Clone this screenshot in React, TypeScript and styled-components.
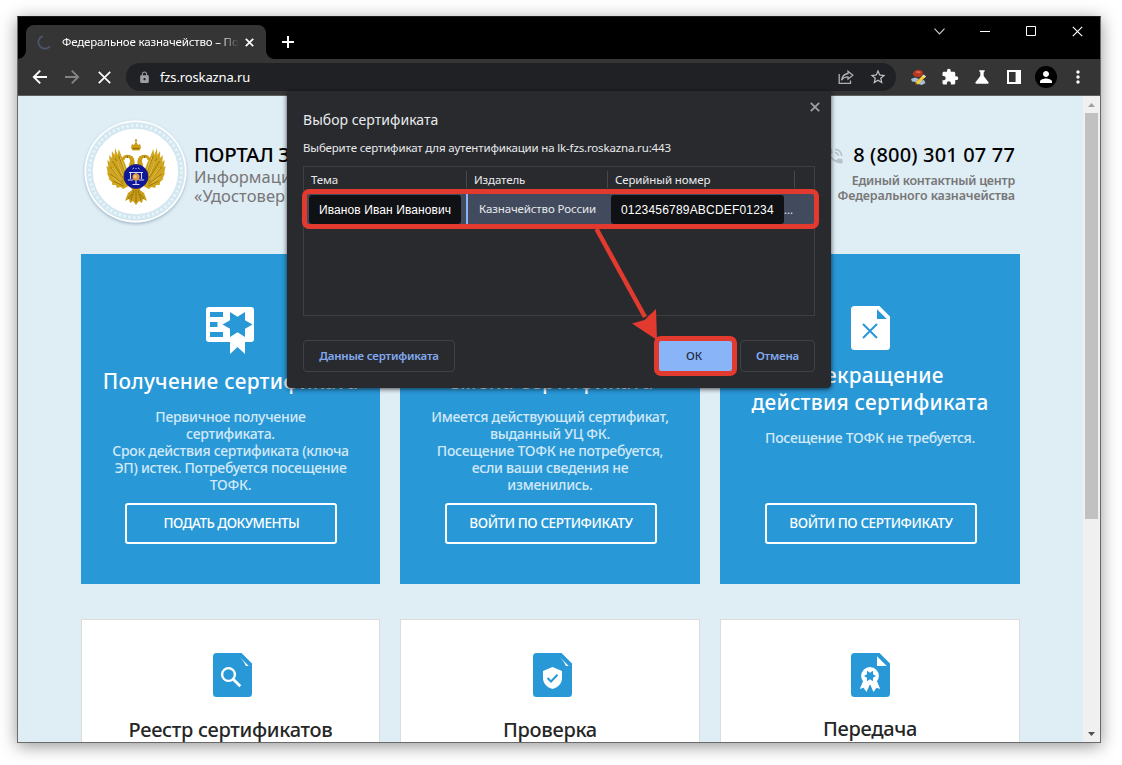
import React from 'react';
import styled, { createGlobalStyle, css } from 'styled-components';
import { MdExtension, MdScience, MdStarBorder, MdPerson, MdLock, MdMoreVert, MdPhoneInTalk } from 'react-icons/md';

const Global = createGlobalStyle`
  * { box-sizing: border-box; }
  body { margin: 0; background: #fff; font-family: "Noto Sans", sans-serif; overflow: hidden; }
`;

const Desktop = styled.div`
  width: 1122px;
  height: 765px;
  padding: 16px 0 0 17px;
  overflow: hidden;
`;

const BrowserWindow = styled.div`
  position: relative;
  display: flex;
  flex-direction: column;
  width: 1084px;
  height: 727px;
  border: 1px solid #6a6a6a;
  border-top-color: #1c1c1c;
  background: #000;
  box-shadow: 0 3px 16px rgba(0, 0, 0, 0.42);
`;

const TitleBar = styled.div`
  display: flex;
  flex: none;
  height: 42px;
  padding-left: 8px;
`;

const Tab = styled.div`
  position: relative;
  display: flex;
  align-items: center;
  width: 240px;
  height: 34px;
  margin-top: 8px;
  padding: 0 12px 0 11px;
  border-radius: 8px 8px 0 0;
  background: #353535;
  color: #fff;
  &::before, &::after {
    content: "";
    position: absolute;
    bottom: 0;
    width: 8px;
    height: 8px;
  }
  &::before { left: -8px; background: radial-gradient(circle at 0 0, transparent 7.5px, #353535 8px); }
  &::after { right: -8px; background: radial-gradient(circle at 100% 0, transparent 7.5px, #353535 8px); }
`;

const TabTitle = styled.span`
  flex: 1;
  margin: 0 7px 0 9px;
  overflow: hidden;
  white-space: nowrap;
  font-size: 11.5px;
  line-height: 18px;
  letter-spacing: -0.17px;
  mask-image: linear-gradient(90deg, #000 157px, transparent 177px);
`;

const NewTab = styled.div`
  display: flex;
  align-items: center;
  margin: 8px 0 0 16px;
  height: 34px;
`;

const Controls = styled.div`
  display: flex;
  margin-left: auto;
  height: 28px;
`;

const Control = styled.div`
  display: flex;
  align-items: center;
  justify-content: center;
  width: 46px;
`;

const Toolbar = styled.div`
  display: flex;
  flex: none;
  align-items: center;
  height: 37px;
  padding: 0 6px;
  border-bottom: 1px solid #5d5e60;
  background: #353535;
`;

const Slot = styled.div`
  display: flex;
  align-items: center;
  justify-content: center;
  width: 32px;
  height: 28px;
  color: #fff;
`;

const Omnibox = styled.div`
  display: flex;
  flex: 1;
  align-items: center;
  height: 28px;
  margin: 0 6px;
  padding: 0 2px 0 12px;
  border-radius: 14px;
  background: #202124;
  color: #9aa0a6;
`;

const Url = styled.span`
  flex: 1;
  margin-left: 9px;
  color: #fff;
  font-size: 13px;
  line-height: 18px;
  letter-spacing: -0.13px;
`;

const Avatar = styled.div`
  display: flex;
  align-items: center;
  justify-content: center;
  width: 22px;
  height: 22px;
  border-radius: 50%;
  background: #000;
`;

const Viewport = styled.div`
  display: flex;
  flex: 1;
  min-height: 0;
  overflow: hidden;
`;

const Page = styled.main`
  flex: 1;
  padding: 0 63px;
  background: #dfedf5;
`;

const PageHeader = styled.header`
  display: flex;
  align-items: flex-start;
  height: 158px;
  padding-top: 22px;
`;

const LogoBox = styled.div`
  width: 108px;
  height: 108px;
  margin-left: 1px;
  flex: none;
`;

const Brand = styled.div`
  margin: 24px 0 0 4px;
  white-space: nowrap;
`;

const BrandName = styled.div`
  margin-bottom: 1px;
  color: #000;
  font-size: 20.5px;
  font-weight: 500;
  line-height: 24px;
  letter-spacing: -0.35px;
`;

const BrandText = styled.div`
  color: #777;
  font-size: 16.5px;
  line-height: 19px;
  letter-spacing: 0.05px;
`;

const Contacts = styled.div`
  display: flex;
  flex-direction: column;
  margin: 22px 5px 0 auto;
  text-align: right;
`;

const Phone = styled.div`
  display: flex;
  align-items: center;
  justify-content: flex-end;
  gap: 8px;
  height: 28px;
  margin-bottom: 5px;
  color: #000;
  font-size: 20px;
  font-weight: 500;
  letter-spacing: 0.16px;
  svg { color: #b7c2c8; margin-top: 3px; }
`;

const ContactLine = styled.div<{ $ls: number }>`
  color: #777;
  font-size: 12.5px;
  font-weight: 600;
  line-height: 15px;
  letter-spacing: ${p => p.$ls}px;
`;

const Grid = styled.div`
  display: grid;
  grid-template-columns: 299px 300px 300px;
  gap: 35px 20px;
`;

const cardBase = css`
  display: flex;
  flex-direction: column;
  align-items: center;
  text-align: center;
`;

const ServiceCard = styled.section<{ $top: number }>`
  ${cardBase}
  height: 330px;
  padding: ${p => p.$top}px 0 40px;
  background: #2898d7;
  color: #fff;
`;

const ServiceTitle = styled.h2<{ $gap: number }>`
  margin: ${p => p.$gap}px 0 13px;
  font-size: 20.8px;
  font-weight: 500;
  line-height: 27px;
  letter-spacing: 0.26px;
  white-space: nowrap;
`;

const Description = styled.p`
  margin: 0;
  color: #d2e9f7;
  font-size: 14px;
  font-weight: 500;
  line-height: 17px;
  letter-spacing: -0.28px;
  white-space: nowrap;
`;

const ActionButton = styled.button<{ $ls: number }>`
  width: 212px;
  height: 41px;
  margin: auto 0 0 1.8px;
  padding: 0 0 2px;
  border: 2px solid #fff;
  border-radius: 3px;
  background: transparent;
  color: #fff;
  font: 500 13.5px/20px "Noto Sans", sans-serif;
  letter-spacing: ${p => p.$ls}px;
`;

const InfoCard = styled.section`
  ${cardBase}
  height: 330px;
  padding-top: 33px;
  border: 1px solid #dcdcdc;
  background: #fff;
`;

const IconShift = styled.div<{ $left?: number; $right?: number }>`
  display: flex;
  padding: 0 ${p => p.$right ?? 0}px 0 ${p => p.$left ?? 0}px;
`;

const InfoTitle = styled.h2<{ $top: number }>`
  margin: ${p => p.$top}px 0 0;
  color: #262626;
  font-size: 20px;
  font-weight: 500;
  line-height: 26px;
  letter-spacing: -0.3px;
`;

const ScrollBar = styled.div`
  display: flex;
  flex-direction: column;
  align-items: center;
  width: 17px;
  background: #f0f0f0;
`;

const ScrollButton = styled.div`
  display: flex;
  align-items: center;
  justify-content: center;
  width: 17px;
  height: 17px;
`;

const ScrollThumb = styled.div`
  width: 13px;
  height: 406px;
  margin-bottom: auto;
  background: #c1c1c1;
`;

const Dialog = styled.div`
  position: absolute;
  left: 269px;
  top: 74px;
  display: flex;
  flex-direction: column;
  width: 544px;
  height: 297px;
  padding: 18px 16px 16px;
  border-radius: 4px;
  background: #292a2d;
  box-shadow: 0 1px 5px rgba(0, 0, 0, 0.7);
  color: #e8eaed;
`;

const DialogClose = styled.div`
  position: absolute;
  right: 11px;
  top: 11px;
  display: flex;
`;

const DialogTitle = styled.div`
  font-size: 14px;
  line-height: 22px;
  letter-spacing: 0.04px;
  white-space: nowrap;
`;

const DialogText = styled.div`
  margin-top: 8px;
  font-size: 11.5px;
  line-height: 18px;
  letter-spacing: -0.16px;
  white-space: nowrap;
`;

const CertTable = styled.div`
  height: 150px;
  margin-top: 9px;
  border: 1px solid #3d3f43;
`;

const columns = css`
  display: grid;
  grid-template-columns: 163px 141px 187px 1fr;
  font-size: 11.5px;
  letter-spacing: -0.12px;
  white-space: nowrap;
`;

const HeadRow = styled.div`
  ${columns}
  height: 27px;
  padding-top: 4px;
`;

const HeadCell = styled.div`
  height: 17px;
  padding-left: 7px;
  border-right: 1px solid #46484c;
  line-height: 18px;
  &:last-child { border-right: 0; }
`;

const CertRow = styled.div`
  ${columns}
  position: relative;
  height: 30px;
  background: #414b5d;
  &::after {
    content: "";
    position: absolute;
    inset: -5px -5px -5px -2px;
    border: 5px solid #e33a30;
    border-radius: 7px;
  }
`;

const CertCell = styled.div<{ $marked?: boolean }>`
  display: flex;
  align-items: center;
  padding: 0 0 ${p => (p.$marked ? 2 : 0)}px ${p => (p.$marked ? 11 : 12)}px;
  margin-left: ${p => (p.$marked ? -1 : 0)}px;
  border-left: ${p => (p.$marked ? '2px solid #8ab4f8' : '0')};
`;

const Redacted = styled.div<{ $width: number; $left: number; $ls: number; $pad: number }>`
  flex: none;
  width: ${p => p.$width}px;
  height: 29px;
  margin-left: ${p => p.$left}px;
  padding-left: ${p => p.$pad}px;
  border-radius: 3px;
  background: #101114;
  color: #fff;
  font: 12px/30px "Liberation Sans", sans-serif;
  letter-spacing: ${p => p.$ls}px;
`;

const Actions = styled.div`
  display: flex;
  gap: 7px;
  margin-top: auto;
`;

const DialogButton = styled.button<{ $width: number; $primary?: boolean }>`
  position: relative;
  width: ${p => p.$width}px;
  height: 32px;
  padding: ${p => (p.$primary ? '0 3px 0 0' : '0')};
  border: 1px solid ${p => (p.$primary ? '#8ab4f8' : '#3f4145')};
  border-radius: 4px;
  background: ${p => (p.$primary ? '#8ab4f8' : 'transparent')};
  color: ${p => (p.$primary ? '#202c44' : '#81a9f0')};
  font: ${p => (p.$primary ? 500 : 600)} 11.5px/18px "Noto Sans", sans-serif;
  letter-spacing: -0.22px;
  margin-right: ${p => (p.$width > 100 ? 'auto' : '0')};
  ${p => p.$primary && css`
    &::after {
      content: "";
      position: absolute;
      inset: -5.5px -5px -4.5px;
      border: 5px solid #e33a30;
      border-radius: 7px;
    }
  `}
`;

const Arrow = styled.svg`
  position: absolute;
  left: 300px;
  top: 137px;
`;

const Cross = ({ size, width, color = '#fff' }: { size: number; width: number; color?: string }) => (
  <svg width={size} height={size} viewBox={`0 0 ${size} ${size}`} stroke={color} strokeWidth={width} fill="none">
    <path d={`M.8 .8 L${size - 0.8} ${size - 0.8} M${size - 0.8} .8 L.8 ${size - 0.8}`} />
  </svg>
);

const BackArrow = ({ color, flip }: { color: string; flip?: boolean }) => (
  <svg width="16" height="16" viewBox="0 0 16 16" fill="none" stroke={color} strokeWidth="1.9" transform={flip ? 'scale(-1 1)' : undefined}>
    <path d="M15 8H2M8.2 1.6 1.8 8l6.4 6.4" />
  </svg>
);

const ShareIcon = () => (
  <svg width="16" height="16" viewBox="0 0 16 16" fill="none" stroke="#aeb1b5" strokeWidth="1.3">
    <path d="M1.2 5V14.3H12.5V11.5" />
    <path d="M10 2.2 14.8 6.2 10 10.2V7.9C7 7.9 5 8.8 3.6 11.2 4 7.6 6.2 5 10 4.5Z" />
  </svg>
);

const PencilExtension = () => (
  <svg width="17" height="17" viewBox="0 0 17 17">
    <path d="M4.5 2 8 .8 12 1.6 13 4 12 7 8 8.2 4 7 2.6 4.6Z" fill="#b63a22" />
    <path d="M5 3 8 2 11 3 9 4.5Z" fill="#e0684b" />
    <path d="M1 10 5 8.5 9 10 6 13 2 12.5Z M9 12 14 11 15.5 14 12 16 8 15Z" fill="#a9bcd8" />
    <path d="M5.5 13.5 13.2 6 15.4 8 8 15.5 5 16Z" fill="#f2cf3a" />
    <path d="M12.4 6.8 13.8 5.5 16 7.4 14.6 8.8Z" fill="#e9e1cf" />
    <path d="M5.5 13.5 8 15.5 4.6 16.4Z" fill="#6b3d22" />
  </svg>
);

const SidePanelIcon = () => (
  <svg width="14" height="14" viewBox="0 0 14 14">
    <path fillRule="evenodd" fill="#fff" d="M0 0H14V14H0Z M2 2V12H8.6V2Z" />
  </svg>
);

const Wing = () => (
  <g>
    <path
      d="M46 57 Q42 44 38.500 39 L35 31 34 37 31 30 30.500 37 27.500 33 27.500 40 24.500 37 25 44 22.500 42 23.500 49 21.500 48 23 55 22 55 24.500 60 24 61 27.500 64 28 67 32 67 33 70 37 69 40 71 46 68Z"
      fill="#d0a61f"
    />
    <path
      d="M44 58 35 38 M42 60 31 40 M41 62 28 43 M40 64 26 49 M40 66 25.500 56 M40 68 29 63"
      stroke="#8c6a0c"
      strokeWidth=".8"
      fill="none"
    />
    <path d="M43 55 37 40 M40 58 33 43 M38 62 28 50 M37 65 28 59" stroke="#edd05c" strokeWidth=".8" fill="none" />
    <path d="M52 60 Q45 54 46.500 46 Q49 41 45 39.500 Q42 39 41 42 L37.500 42.500 Q39 37.500 44 36.800 Q52 36.500 52.500 44 Q52 50 54 54Z" fill="#c99d18" />
    <circle cx="44.500" cy="39" r=".7" fill="#4f3a05" />
  </g>
);

const Emblem = () => (
  <svg width="108" height="108" viewBox="0 0 108 108">
    <defs>
      <filter id="logoShadow" x="-10%" y="-10%" width="120%" height="125%">
        <feDropShadow dx="0" dy="1.5" stdDeviation="1.6" floodColor="#5b7f95" floodOpacity=".5" />
      </filter>
    </defs>
    <circle cx="53.500" cy="53.500" r="51" fill="#fff" filter="url(#logoShadow)" />
    <circle cx="53.500" cy="53.500" r="46" fill="none" stroke="#d3e7f1" strokeWidth="6.600" />
    <circle cx="53.500" cy="53.500" r="46" fill="none" stroke="#eaf5fa" strokeWidth="2.800" strokeDasharray="2.400 2.417" />
    <path d="M48 64 60 64 58 72 62 75 65 83 61 81 60 85 57 83 54 87 51 83 48 85 47 81 43 83 46 75 50 72Z" fill="#c99d18" />
    <path d="M52 72 49 82 M54 72V84 M56 72 59 82 M50 76 46 81 M58 76 62 81" stroke="#8c6a0c" strokeWidth=".8" />
    <g transform="translate(4.860 0) scale(.91 1)">
      <Wing />
      <g transform="translate(108 0) scale(-1 1)">
        <Wing />
      </g>
    </g>
    <path d="M49 50H59V62H49Z" fill="#b78c14" />
    <path d="M49 30 50 26 52 27 54 23 56 27 58 26 59 30 57.500 32.500H50.500Z" fill="#c99d18" />
    <path d="M54 21V24M52.800 22.300H55.200" stroke="#a37c12" strokeWidth=".8" />
    <path d="M51 30.500H57" stroke="#7c5d0a" strokeWidth=".8" />
    <circle cx="54" cy="58.500" r="12" fill="#10189a" stroke="#1c1a6b" strokeWidth=".8" />
    <path
      d="M47 54.500H61M48.500 54.500V61M59.500 54.500V61M54 54.500V66M45.800 62H51.200M56.800 62H62.200M50.500 66.500H57.500"
      stroke="#d5daf3"
      strokeWidth="1.100"
      fill="none"
    />
    <path d="M50.500 51 52 49.800M57.500 51 56 49.800M54 50V51" stroke="#c8cdf0" strokeWidth="1" />
    <circle cx="54" cy="59" r="3.600" fill="#e09a3c" />
    <circle cx="53" cy="58.500" r="1.500" fill="#f2c48a" />
  </svg>
);

const CertificateIcon = () => (
  <svg width="48" height="47" viewBox="0 0 48 47">
    <path d="M3 0H45a3 3 0 0 1 3 3V32a3 3 0 0 1-3 3H39V47L31.500 40 24 47V35H3a3 3 0 0 1-3-3V3A3 3 0 0 1 3 0Z" fill="#fff" />
    <path d="M4 5H17V10H4Z M4 15H11.500V20H4Z M4 25H17V30H4Z" fill="#2898d7" />
    <path d="M24 5 31.500 9.700 39 5V13.300L46.500 17.500 39 21.700V30L31.500 25.300 24 30V21.700L16.500 17.500 24 13.300Z" fill="#2898d7" />
  </svg>
);

type FileKind = 'cross' | 'search' | 'shield' | 'award';

const Sheet = ({ kind }: { kind: FileKind }) => {
  const inverse = kind === 'cross';
  const main = inverse ? '#fff' : '#2898d7';
  const mark = inverse ? '#2898d7' : '#fff';
  return (
    <svg width="39" height="44" viewBox="0 0 39 44">
      <path d="M3.500 0H28.500L39 10.500V40.500A3.500 3.500 0 0 1 35.500 44H3.500A3.500 3.500 0 0 1 0 40.500V3.500A3.500 3.500 0 0 1 3.500 0Z" fill={main} />
      {kind === 'cross' || kind === 'award' ? (
        <path d="M26 3.200V13H35.800Z" fill={mark} />
      ) : (
        <path d="M26 3.200 35.800 13H32.800Q32 9.500 26 3.200Z" fill={mark} />
      )}
      {kind === 'cross' && <path d="M12 18 26 32M26 18 12 32" stroke={mark} strokeWidth="2" />}
      {kind === 'search' && (
        <g fill="none" stroke={mark}>
          <circle cx="15.500" cy="21.500" r="6.400" strokeWidth="2.400" />
          <path d="M20 26 27.300 33.300" strokeWidth="2.800" />
        </g>
      )}
      {kind === 'shield' && (
        <g>
          <path d="M19.500 14 29 18V25C29 30.500 25 34.500 19.500 36 14 34.500 10 30.500 10 25V18Z" fill={mark} />
          <path d="M14.500 25 18 28.500 24.500 21.800" fill="none" stroke={main} strokeWidth="2" />
        </g>
      )}
      {kind === 'award' && (
        <g>
          <path d="M12.500 27 8.800 36 12.500 34.800 15.500 39 19 31 22.500 39 25.500 34.800 29.200 36 25.500 27Z" fill={mark} />
          <circle cx="19" cy="23" r="8.900" fill={mark} />
          <path d="M16 17.800 19 19.700 22 17.800V21.200L25 23 22 24.800V28.200L19 26.300 16 28.200V24.800L13 23 16 21.200Z" fill={main} />
        </g>
      )}
    </svg>
  );
};

export default function App() {
  return (
    <Desktop>
      <Global />
      <BrowserWindow>
        <TitleBar>
          <Tab>
            <svg width="16" height="16" viewBox="0 0 16 16" fill="none" stroke="#4c566f" strokeWidth="1.8">
              <path d="M5.600 2.100A6.500 6.500 0 1 0 13 12.200" />
            </svg>
            <TabTitle>Федеральное казначейство – По</TabTitle>
            <Cross size={9} width={1.7} />
          </Tab>
          <NewTab>
            <svg width="12" height="12" viewBox="0 0 12 12" stroke="#fff" strokeWidth="2">
              <path d="M6 0V12M0 6H12" />
            </svg>
          </NewTab>
          <Controls>
            <Control>
              <svg width="11" height="7" viewBox="0 0 11 7" fill="none" stroke="#cfcfcf" strokeWidth="1.100"><path d="M.5.7 5.500 5.900 10.500.7" /></svg>
            </Control>
            <Control>
              <svg width="10" height="1" viewBox="0 0 10 1"><path d="M0 0H10V1H0Z" fill="#fff" /></svg>
            </Control>
            <Control>
              <svg width="10" height="10" viewBox="0 0 10 10" fill="none" stroke="#fff"><path d="M.5.5H9.500V9.500H.5Z" /></svg>
            </Control>
            <Control><Cross size={11} width={1.15} /></Control>
          </Controls>
        </TitleBar>
        <Toolbar>
          <Slot><BackArrow color="#fff" /></Slot>
          <Slot><BackArrow color="#838383" flip /></Slot>
          <Slot><Cross size={13} width={1.7} /></Slot>
          <Omnibox>
            <MdLock size={13} />
            <Url>fzs.roskazna.ru</Url>
            <Slot><ShareIcon /></Slot>
            <Slot><MdStarBorder size={18} color="#c0c3c6" /></Slot>
          </Omnibox>
          <Slot><PencilExtension /></Slot>
          <Slot><MdExtension size={18} /></Slot>
          <Slot><MdScience size={20} /></Slot>
          <Slot><SidePanelIcon /></Slot>
          <Slot><Avatar><MdPerson size={18} /></Avatar></Slot>
          <Slot><MdMoreVert size={20} /></Slot>
        </Toolbar>
        <Viewport>
          <Page>
            <PageHeader>
              <LogoBox><Emblem /></LogoBox>
              <Brand>
                <BrandName>ПОРТАЛ З</BrandName>
                <BrandText>Информаци</BrandText>
                <BrandText>«Удостовер</BrandText>
              </Brand>
              <Contacts>
                <Phone><MdPhoneInTalk size={20} />8 (800) 301 07 77</Phone>
                <ContactLine $ls={-0.24}>Единый контактный центр</ContactLine>
                <ContactLine $ls={-0.14}>Федерального казначейства</ContactLine>
              </Contacts>
            </PageHeader>
            <Grid>
              <ServiceCard $top={53}>
                <IconShift $right={1}><CertificateIcon /></IconShift>
                <ServiceTitle $gap={14}>Получение сертификата</ServiceTitle>
                <Description>
                  Первичное получение<br />сертификата.<br />Срок действия сертификата (ключа<br />ЭП) истек. Потребуется посещение<br />ТОФК.
                </Description>
                <ActionButton $ls={-0.54}>ПОДАТЬ ДОКУМЕНТЫ</ActionButton>
              </ServiceCard>
              <ServiceCard $top={53}>
                <IconShift><CertificateIcon /></IconShift>
                <ServiceTitle $gap={14}>Смена сертификата</ServiceTitle>
                <Description>
                  Имеется действующий сертификат,<br />выданный УЦ ФК.<br />Посещение ТОФК не потребуется,<br />если ваши сведения не<br />изменились.
                </Description>
                <ActionButton $ls={-0.42}>ВОЙТИ ПО СЕРТИФИКАТУ</ActionButton>
              </ServiceCard>
              <ServiceCard $top={52}>
                <IconShift><Sheet kind="cross" /></IconShift>
                <ServiceTitle $gap={12}>Прекращение<br />действия сертификата</ServiceTitle>
                <Description>Посещение ТОФК не требуется.</Description>
                <ActionButton $ls={-0.42}>ВОЙТИ ПО СЕРТИФИКАТУ</ActionButton>
              </ServiceCard>
              <InfoCard>
                <IconShift $left={4}><Sheet kind="search" /></IconShift>
                <InfoTitle $top={20}>Реестр сертификатов</InfoTitle>
              </InfoCard>
              <InfoCard>
                <IconShift $left={4}><Sheet kind="shield" /></IconShift>
                <InfoTitle $top={20}>Проверка</InfoTitle>
              </InfoCard>
              <InfoCard>
                <IconShift><Sheet kind="award" /></IconShift>
                <InfoTitle $top={19}>Передача</InfoTitle>
              </InfoCard>
            </Grid>
          </Page>
          <ScrollBar>
            <ScrollButton><svg width="7" height="4" viewBox="0 0 7 4"><path d="M0 4 3.500 0 7 4Z" fill="#a0a0a0" /></svg></ScrollButton>
            <ScrollThumb />
            <ScrollButton><svg width="7" height="4" viewBox="0 0 7 4"><path d="M0 0H7L3.500 4Z" fill="#505050" /></svg></ScrollButton>
          </ScrollBar>
        </Viewport>
        <Dialog>
          <DialogClose><Cross size={10} width={1.8} color="#9aa0a6" /></DialogClose>
          <DialogTitle>Выбор сертификата</DialogTitle>
          <DialogText>Выберите сертификат для аутентификации на lk-fzs.roskazna.ru:443</DialogText>
          <CertTable>
            <HeadRow>
              <HeadCell>Тема</HeadCell>
              <HeadCell>Издатель</HeadCell>
              <HeadCell>Серийный номер</HeadCell>
              <HeadCell />
            </HeadRow>
            <CertRow>
              <CertCell><Redacted $width={152} $left={-7} $pad={10} $ls={0.1}>Иванов Иван Иванович</Redacted></CertCell>
              <CertCell $marked>Казначейство России</CertCell>
              <CertCell><Redacted $width={173} $left={-9} $pad={10} $ls={0.19}>0123456789ABCDEF01234</Redacted>...</CertCell>
            </CertRow>
          </CertTable>
          <Actions>
            <DialogButton $width={152}>Данные сертификата</DialogButton>
            <DialogButton $width={75} $primary>ОК</DialogButton>
            <DialogButton $width={75}>Отмена</DialogButton>
          </Actions>
          <Arrow width="80" height="115" viewBox="0 0 80 115">
            <path d="M9.500 1 58 89" stroke="#e33a30" strokeWidth="4.500" />
            <path d="M70 112 45 95.500 57.500 92 69 81Z" fill="#e33a30" />
          </Arrow>
        </Dialog>
      </BrowserWindow>
    </Desktop>
  );
}
